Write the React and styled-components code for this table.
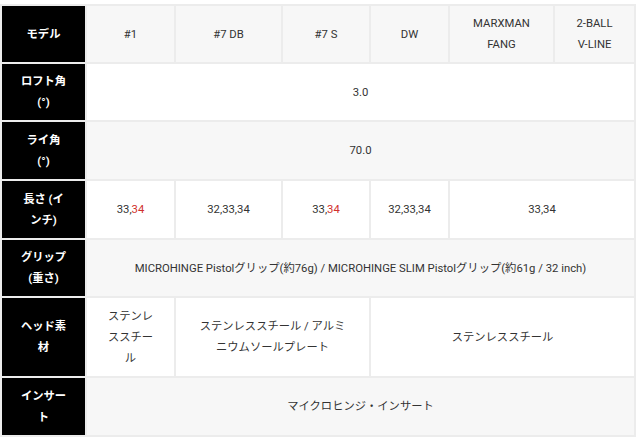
import React from "react";
import styled, { createGlobalStyle } from "styled-components";

const Global = createGlobalStyle`
  html, body { margin: 0; padding: 0; background: #fff; }
  body { font-family: Roboto, "Noto Sans CJK JP", sans-serif; }
`;

const Wrap = styled.div`
  padding: 4px 0 0 0;
`;

const Table = styled.table`
  width: 634px;
  table-layout: fixed;
  border-collapse: collapse;
  font-size: 11.3px;
  color: #333;
`;

const Row = styled.tr`
  height: ${(p) => p.$h}px;
  background: ${(p) => (p.$alt ? "#f7f7f7" : "#fff")};
`;

const Th = styled.th`
  background: #000;
  color: #fff;
  font-weight: 700;
  border: 2px solid #ececec;
  text-align: center;
  vertical-align: middle;
  line-height: 21px;
  padding: 4px 6px;
`;

const Td = styled.td`
  border: 2px solid #ececec;
  text-align: center;
  vertical-align: middle;
  line-height: 21px;
  padding: 4px 6px;
`;

const Red = styled.span`
  color: #d1302c;
`;

const widths = [85, 89, 107, 88, 79, 105, 81];

export default function App() {
  return (
    <Wrap>
      <Global />
      <Table>
        <colgroup>
          {widths.map((w, i) => (
            <col key={i} style={{ width: w }} />
          ))}
        </colgroup>
        <tbody>
          <Row $h={58} $alt>
            <Th>モデル</Th>
            <Td>#1</Td>
            <Td>#7 DB</Td>
            <Td>#7 S</Td>
            <Td>DW</Td>
            <Td>MARXMAN<br />FANG</Td>
            <Td>2-BALL<br />V-LINE</Td>
          </Row>
          <Row $h={58}>
            <Th>ロフト角<br />(°)</Th>
            <Td colSpan={6}>3.0</Td>
          </Row>
          <Row $h={59} $alt>
            <Th>ライ角<br />(°)</Th>
            <Td colSpan={6}>70.0</Td>
          </Row>
          <Row $h={59}>
            <Th>長さ (イ<br />ンチ)</Th>
            <Td>33,<Red>34</Red></Td>
            <Td>32,33,34</Td>
            <Td>33,<Red>34</Red></Td>
            <Td>32,33,34</Td>
            <Td colSpan={2}>33,34</Td>
          </Row>
          <Row $h={58} $alt>
            <Th>グリップ<br />(重さ)</Th>
            <Td colSpan={6}>
              MICROHINGE Pistolグリップ(約76g) / MICROHINGE SLIM Pistolグリップ(約61g / 32 inch)
            </Td>
          </Row>
          <Row $h={80}>
            <Th>ヘッド素<br />材</Th>
            <Td>ステンレ<br />ススチー<br />ル</Td>
            <Td colSpan={2}>ステンレススチール / アルミ<br />ニウムソールプレート</Td>
            <Td colSpan={3}>ステンレススチール</Td>
          </Row>
          <Row $h={59} $alt>
            <Th>インサー<br />ト</Th>
            <Td colSpan={6}>マイクロヒンジ・インサート</Td>
          </Row>
        </tbody>
      </Table>
    </Wrap>
  );
}
